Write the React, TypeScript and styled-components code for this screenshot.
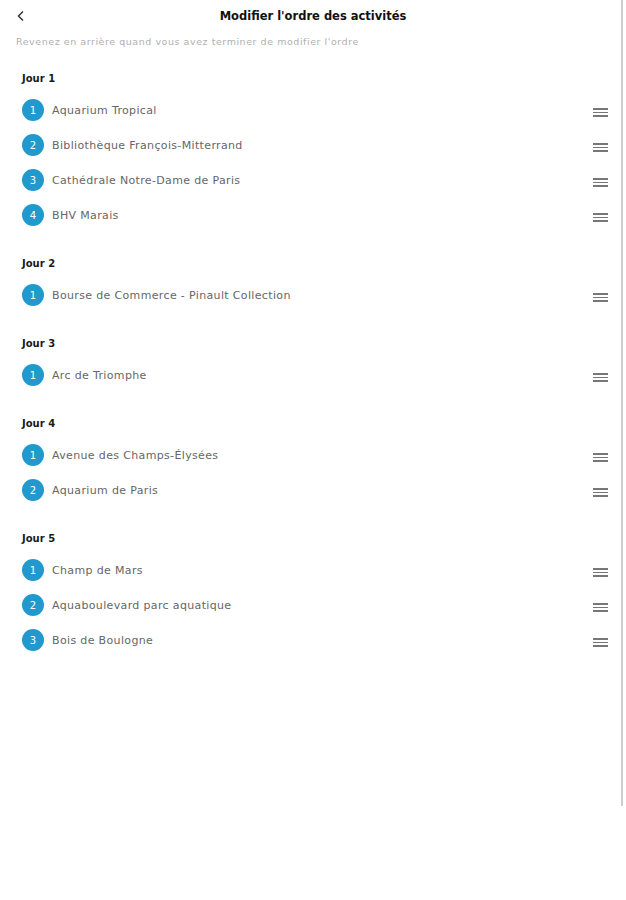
import styled, { createGlobalStyle } from 'styled-components';

const GlobalStyle = createGlobalStyle`
  html, body {
    margin: 0;
    padding: 0;
    background: #ffffff;
  }
  body {
    font-family: "DejaVu Sans", "Open Sans", sans-serif;
  }
`;

const Screen = styled.div`
  width: 621px;
  height: 806px;
  border-right: 2px solid #cfcfcf;
  box-sizing: content-box;
  overflow: hidden;
`;

const Header = styled.header`
  position: relative;
  height: 32px;
  display: flex;
  align-items: center;
  justify-content: center;
`;

const BackButton = styled.button`
  position: absolute;
  left: 13px;
  top: 8px;
  width: 16px;
  height: 16px;
  padding: 0;
  border: none;
  background: none;
  display: flex;
  align-items: center;
  justify-content: center;
`;

const Title = styled.h1`
  margin: 0;
  font-size: 11.5px;
  font-weight: 600;
  color: #111;
  padding-left: 5px;
`;

const Hint = styled.p`
  margin: 4px 0 0 16px;
  font-size: 9.5px;
  letter-spacing: 0.55px;
  color: #b0b0b0;
`;

const Days = styled.div`
  display: flex;
  flex-direction: column;
  gap: 24.5px;
  padding: 25px 0 0 22px;
`;

const Day = styled.section`
  display: flex;
  flex-direction: column;
`;

const DayTitle = styled.h2`
  margin: 0 0 6.5px 0;
  font-size: 10px;
  font-weight: 600;
  color: #1a1a1a;
  line-height: 14px;
`;

const Row = styled.div`
  height: 35px;
  display: flex;
  align-items: center;
  padding-right: 13px;
`;

const Badge = styled.span`
  width: 22px;
  height: 22px;
  border-radius: 50%;
  background: #2299cc;
  color: #fff;
  font-size: 10px;
  display: flex;
  align-items: center;
  justify-content: center;
  flex-shrink: 0;
`;

const Name = styled.span`
  margin-left: 8px;
  flex: 1;
  font-size: 11px;
  letter-spacing: 0.35px;
  color: #666;
`;

const Handle = styled.span`
  width: 15px;
  display: flex;
  flex-direction: column;
  gap: 2.2px;
  margin-top: 5px;
`;

const HandleLine = styled.span`
  height: 1.3px;
  background: #777;
`;

const days: string[][] = [
  [
    'Aquarium Tropical',
    'Bibliothèque François-Mitterrand',
    'Cathédrale Notre-Dame de Paris',
    'BHV Marais',
  ],
  ['Bourse de Commerce - Pinault Collection'],
  ['Arc de Triomphe'],
  ['Avenue des Champs-Élysées', 'Aquarium de Paris'],
  ['Champ de Mars', 'Aquaboulevard parc aquatique', 'Bois de Boulogne'],
];

export default function App() {
  return (
    <>
      <GlobalStyle />
      <Screen>
        <Header>
          <BackButton aria-label="Retour">
            <svg width="10" height="12" viewBox="0 0 10 12">
              <path d="M7 1.5 L2.5 6 L7 10.5" fill="none" stroke="#333" strokeWidth="1.5" />
            </svg>
          </BackButton>
          <Title>Modifier l'ordre des activités</Title>
        </Header>
        <Hint>Revenez en arrière quand vous avez terminer de modifier l'ordre</Hint>
        <Days>
          {days.map((items, d) => (
            <Day key={d}>
              <DayTitle>Jour {d + 1}</DayTitle>
              {items.map((item, i) => (
                <Row key={item}>
                  <Badge>{i + 1}</Badge>
                  <Name>{item}</Name>
                  <Handle>
                    <HandleLine />
                    <HandleLine />
                    <HandleLine />
                  </Handle>
                </Row>
              ))}
            </Day>
          ))}
        </Days>
      </Screen>
    </>
  );
}
